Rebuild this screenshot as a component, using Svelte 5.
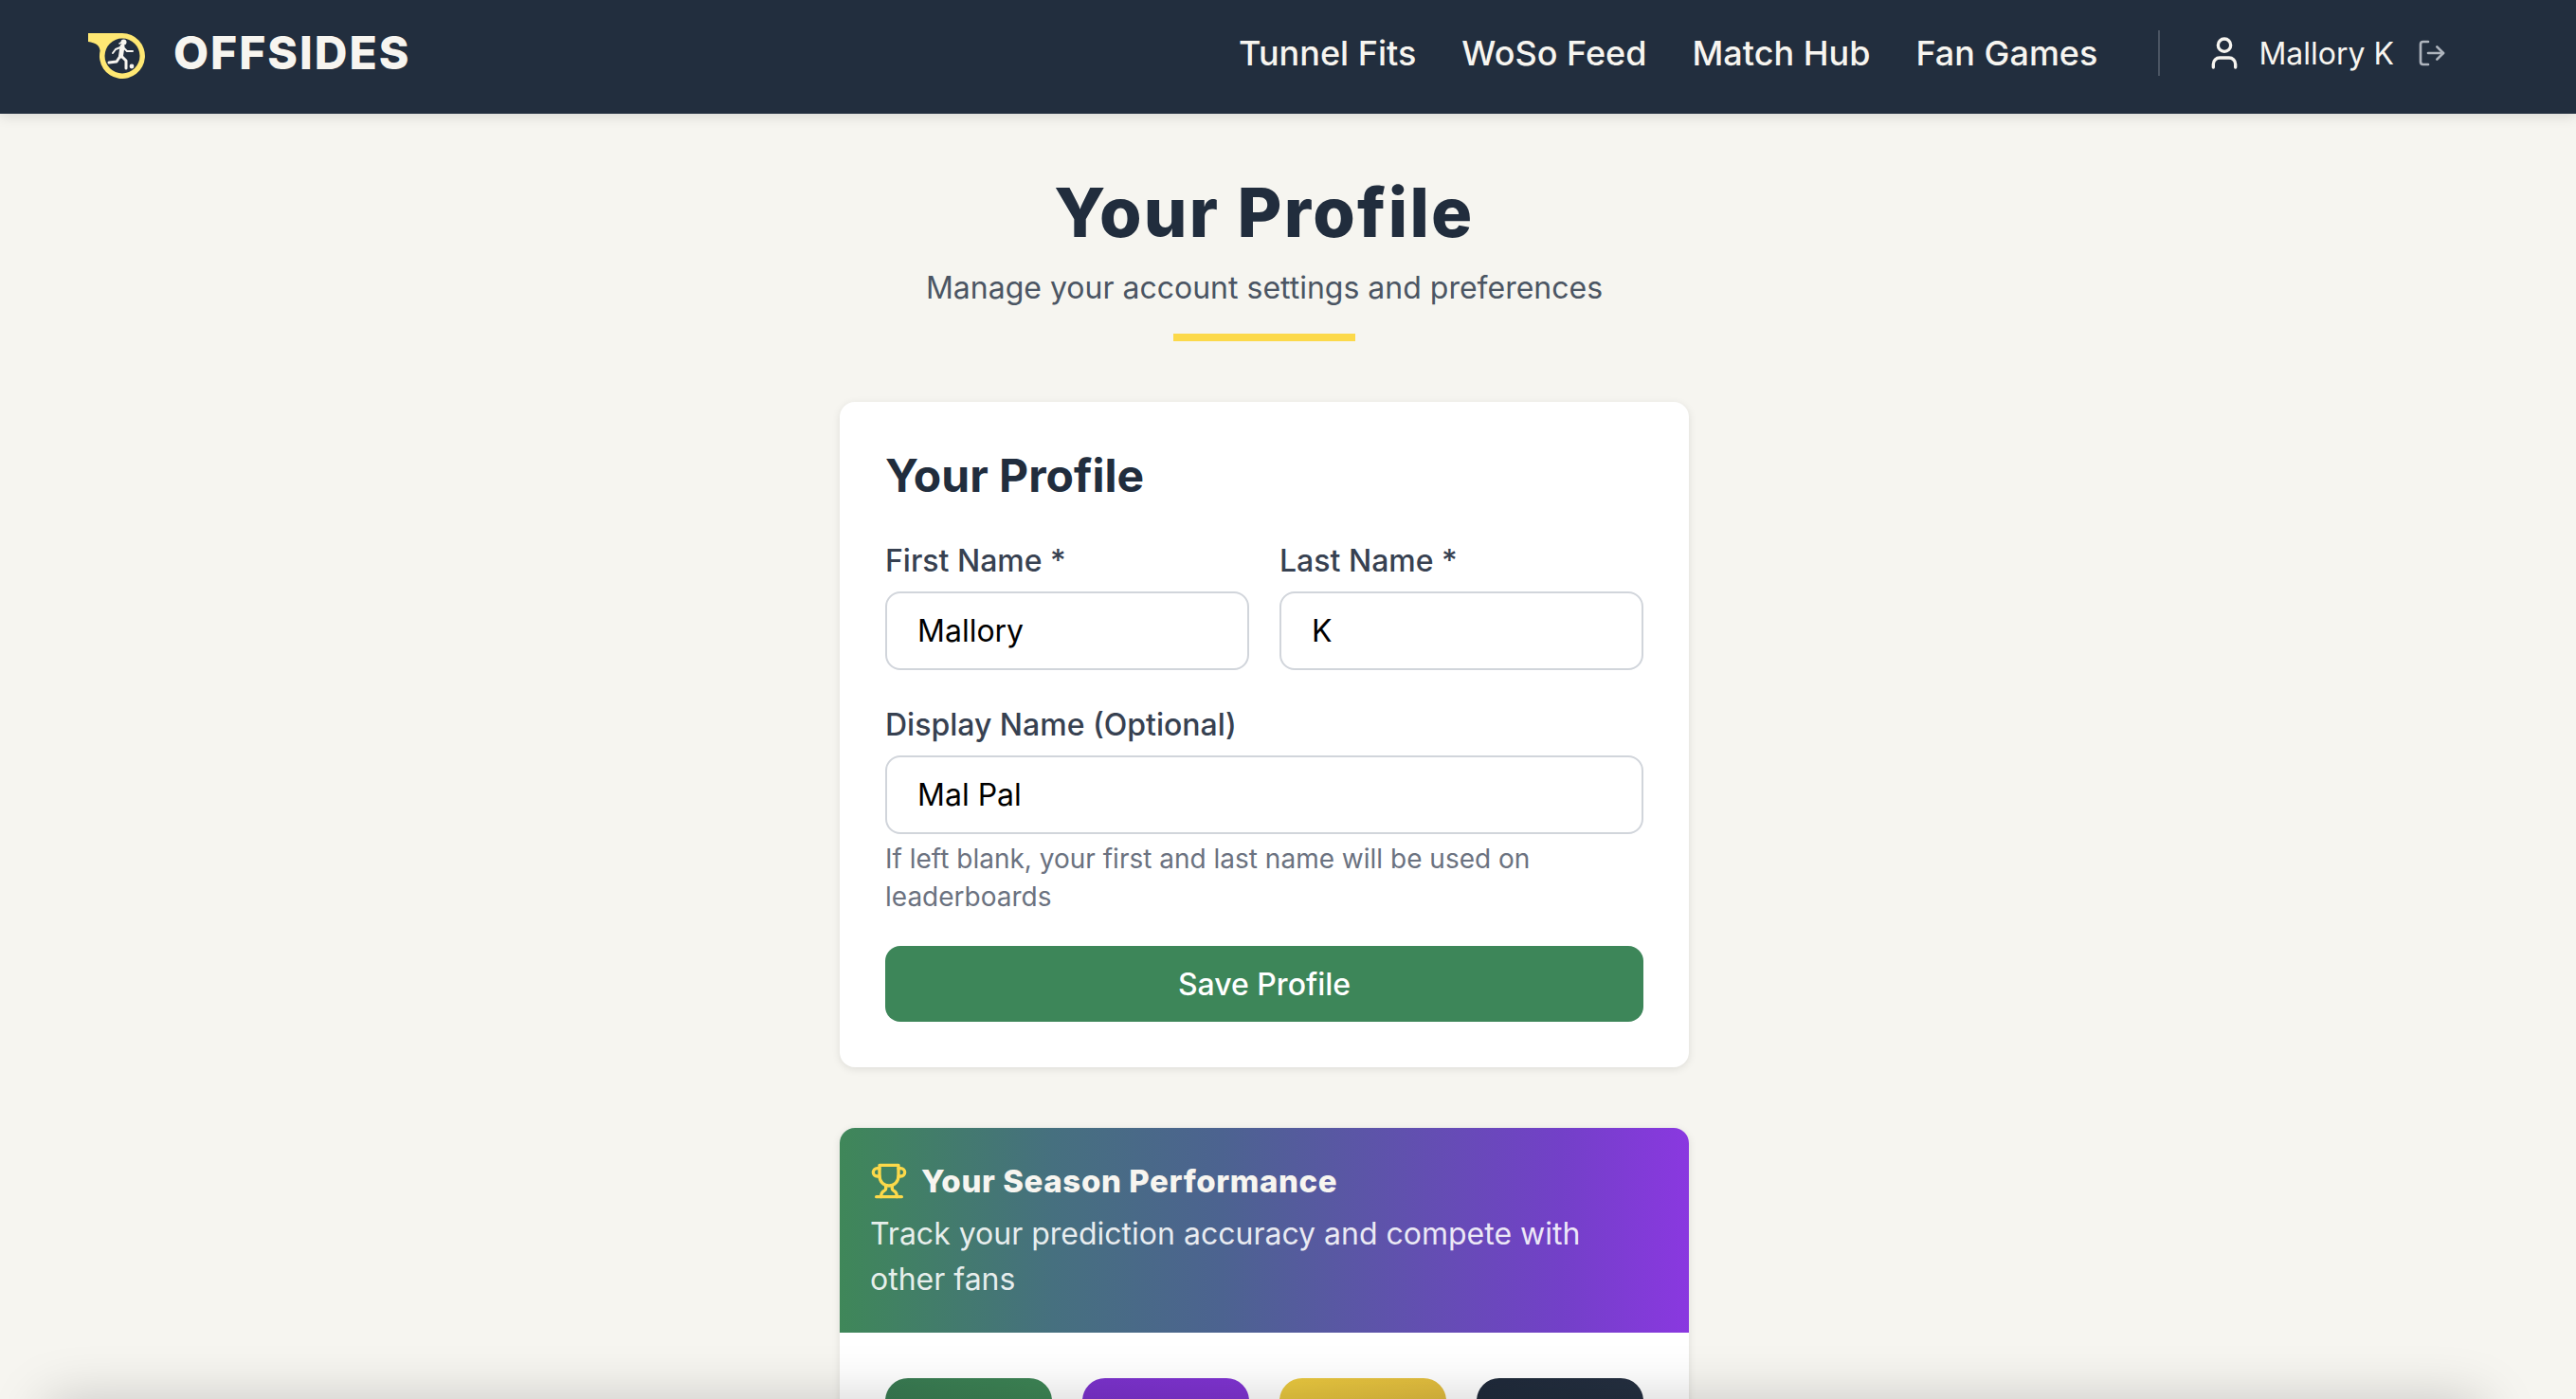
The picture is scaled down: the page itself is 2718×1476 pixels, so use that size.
<script>
	let navLinks = ["Tunnel Fits", "WoSo Feed", "Match Hub", "Fan Games"];
	let tiles = ["green", "purple", "yellow", "navy"];
</script>

<div class="page">
	<header class="nav">
		<a class="brand" href="#home">
			<svg class="logo" viewBox="0 0 60 48" width="60" height="48" aria-hidden="true">
				<path d="M0 0H36A24 24 0 1 1 12.6 18.5C12 13 8 10 0 9Z" fill="#ffe873" />
				<circle cx="36" cy="24" r="18.5" fill="#222e3e" />
				<circle cx="37.5" cy="9.5" r="3" fill="#f7f5f0" />
				<path d="M37 9 33 11" stroke="#f7f5f0" stroke-width="1.6" fill="none" stroke-linecap="round" />
				<path d="M36 14 34.5 24" stroke="#f7f5f0" stroke-width="5" fill="none" stroke-linecap="round" />
				<path d="M37 15 41 19 47 19M34 15 29 17 26 21" stroke="#f7f5f0" stroke-width="2" fill="none" stroke-linecap="round" stroke-linejoin="round" />
				<path d="M34 24 30 30 22 31M35 24 40 29 40 37" stroke="#f7f5f0" stroke-width="3" fill="none" stroke-linecap="round" stroke-linejoin="round" />
				<circle cx="46" cy="35" r="2.4" fill="#f7f5f0" />
			</svg>
			<span class="wordmark">OFFSIDES</span>
		</a>
		<nav class="links">
			{#each navLinks as link}
				<a href="#top">{link}</a>
			{/each}
		</nav>
		<div class="user">
			<svg width="40" height="40" viewBox="0 0 24 24" fill="none" stroke="#f7f5f0" stroke-width="2" stroke-linecap="round" stroke-linejoin="round" aria-hidden="true">
				<path d="M19 21v-2a4 4 0 0 0-4-4H9a4 4 0 0 0-4 4v2" />
				<circle cx="12" cy="7" r="4" />
			</svg>
			<span class="username">Mallory K</span>
			<svg class="logout" width="32" height="32" viewBox="0 0 24 24" fill="none" stroke="#aeb4bd" stroke-width="2" stroke-linecap="round" stroke-linejoin="round" aria-hidden="true">
				<path d="M9 21H5a2 2 0 0 1-2-2V5a2 2 0 0 1 2-2h4" />
				<path d="m16 17 5-5-5-5" />
				<path d="M21 12H9" />
			</svg>
		</div>
	</header>

	<main class="content">
		<div class="heading">
			<h1>Your Profile</h1>
			<p>Manage your account settings and preferences</p>
			<div class="rule"></div>
		</div>

		<section class="card profile">
			<h2>Your Profile</h2>
			<div class="row">
				<label>
					<span>First Name *</span>
					<input type="text" value="Mallory" />
				</label>
				<label>
					<span>Last Name *</span>
					<input type="text" value="K" />
				</label>
			</div>
			<label class="display">
				<span>Display Name (Optional)</span>
				<input type="text" value="Mal Pal" />
			</label>
			<p class="hint">If left blank, your first and last name will be used on leaderboards</p>
			<button class="save" type="button">Save Profile</button>
		</section>

		<section class="card season">
			<div class="banner">
				<div class="bannerTitle">
					<svg width="40" height="40" viewBox="0 0 24 24" fill="none" stroke="#fcd94a" stroke-width="2" stroke-linecap="round" stroke-linejoin="round" aria-hidden="true">
						<path d="M6 9H4.5a2.5 2.5 0 0 1 0-5H6" />
						<path d="M18 9h1.5a2.5 2.5 0 0 0 0-5H18" />
						<path d="M4 22h16" />
						<path d="M10 14.66V17c0 .55-.47.98-.97 1.21C7.85 18.75 7 20.24 7 22" />
						<path d="M14 14.66V17c0 .55.47.98.97 1.21C16.15 18.75 17 20.24 17 22" />
						<path d="M18 2H6v7a6 6 0 0 0 12 0V2Z" />
					</svg>
					<h3>Your Season Performance</h3>
				</div>
				<p>Track your prediction accuracy and compete with other fans</p>
			</div>
			<div class="tiles">
				{#each tiles as tile}
					<div class="tile {tile}"></div>
				{/each}
			</div>
		</section>
	</main>
	<div class="bottomShade"></div>
</div>

<style>
	:global(body) {
		margin: 0;
		background: #f6f5f0;
	}
	.page {
		position: relative;
		height: 1476px;
		overflow: hidden;
		font-family: Inter, "Liberation Sans", sans-serif;
		background: #f6f5f0;
	}
	.nav {
		height: 120px;
		box-sizing: border-box;
		padding: 0 136px 8px 93px;
		display: flex;
		align-items: center;
		background: #222e3e;
		box-shadow: 0 4px 12px rgba(0, 0, 0, 0.1);
		position: relative;
		z-index: 1;
	}
	.brand {
		display: flex;
		align-items: center;
		gap: 30px;
		text-decoration: none;
		margin-right: auto;
	}
	.logo {
		display: block;
		margin-top: 5px;
	}
	.wordmark {
		font-size: 48px;
		line-height: 56px;
		font-weight: 800;
		color: #f7f5f0;
		letter-spacing: 2px;
	}
	.links {
		display: flex;
		gap: 48px;
	}
	.links a {
		color: #f7f5f0;
		font-size: 36px;
		line-height: 44px;
		font-weight: 500;
		text-decoration: none;
	}
	.user {
		display: flex;
		align-items: center;
		margin-left: 64px;
		padding-left: 48px;
		border-left: 2px solid #4b5563;
		height: 48px;
	}
	.username {
		color: #f7f5f0;
		font-size: 32px;
		margin-left: 16px;
	}
	.logout {
		margin-left: 24px;
	}
	.content {
		padding: 0 50px 0 0;
		display: flex;
		flex-direction: column;
		align-items: center;
	}
	.heading {
		display: flex;
		flex-direction: column;
		align-items: center;
		padding-top: 64px;
	}
	h1 {
		margin: 0;
		font-size: 72px;
		line-height: 80px;
		font-weight: 800;
		letter-spacing: 2.3px;
		color: #212d3d;
	}
	.heading p {
		margin: 16px 0 0;
		font-size: 32px;
		line-height: 48px;
		color: #4b5563;
	}
	.rule {
		width: 192px;
		height: 8px;
		margin-top: 24px;
		background: #fcd94a;
	}
	.card {
		width: 896px;
		background: #fff;
		border-radius: 16px;
		box-shadow: 0 2px 8px rgba(0, 0, 0, 0.1);
	}
	.profile {
		box-sizing: border-box;
		margin-top: 64px;
		padding: 48px;
	}
	h2 {
		margin: 0 0 40px;
		font-size: 48px;
		line-height: 60px;
		font-weight: 700;
		color: #212d3d;
	}
	.row {
		display: grid;
		grid-template-columns: 1fr 1fr;
		gap: 32px;
	}
	label {
		display: flex;
		flex-direction: column;
	}
	label span {
		font-size: 32px;
		line-height: 40px;
		font-weight: 500;
		color: #374151;
		margin-bottom: 12px;
	}
	input {
		box-sizing: border-box;
		width: 100%;
		height: 83px;
		padding: 0 32px;
		border: 2px solid #d1d5db;
		border-radius: 16px;
		background: #fff;
		color: #000;
		font-family: inherit;
		font-size: 32px;
	}
	.display {
		margin-top: 38px;
	}
	.hint {
		margin: 6px 0 0;
		font-size: 28px;
		line-height: 40px;
		color: #6b7280;
	}
	.save {
		display: block;
		width: 100%;
		height: 80px;
		margin-top: 32px;
		border: none;
		border-radius: 16px;
		background: #3d8659;
		color: #fff;
		font-family: inherit;
		font-size: 32px;
		font-weight: 500;
	}
	.season {
		margin-top: 64px;
		overflow: hidden;
	}
	.banner {
		box-sizing: border-box;
		height: 216px;
		padding: 32px;
		background: linear-gradient(90deg, #3f8759 0%, #46707f 25%, #4c6390 45%, #5f52ac 65%, #7340c8 85%, #8a38e0 100%);
	}
	.bannerTitle {
		display: flex;
		align-items: center;
		gap: 14px;
	}
	h3 {
		margin: 0;
		font-size: 33px;
		line-height: 48px;
		font-weight: 800;
		letter-spacing: 0.6px;
		color: #f7f5f0;
	}
	.banner p {
		margin: 8px 0 0;
		font-size: 32px;
		line-height: 48px;
		color: rgba(255, 255, 255, 0.88);
	}
	.tiles {
		display: grid;
		grid-template-columns: repeat(4, 1fr);
		gap: 32px;
		padding: 48px;
	}
	.tile {
		height: 200px;
		border-radius: 24px;
	}
	.green {
		background: linear-gradient(135deg, #397a52, #429158);
	}
	.purple {
		background: linear-gradient(135deg, #7b32cc, #8535d8);
	}
	.yellow {
		background: linear-gradient(135deg, #eac93f, #d9b03e);
	}
	.navy {
		background: linear-gradient(135deg, #1f2a3a, #2b3648);
	}
	.bottomShade {
		position: absolute;
		left: 60px;
		right: 110px;
		top: 1490px;
		height: 40px;
		box-shadow: 0 0 60px 10px rgba(0, 0, 0, 0.22);
	}
</style>
